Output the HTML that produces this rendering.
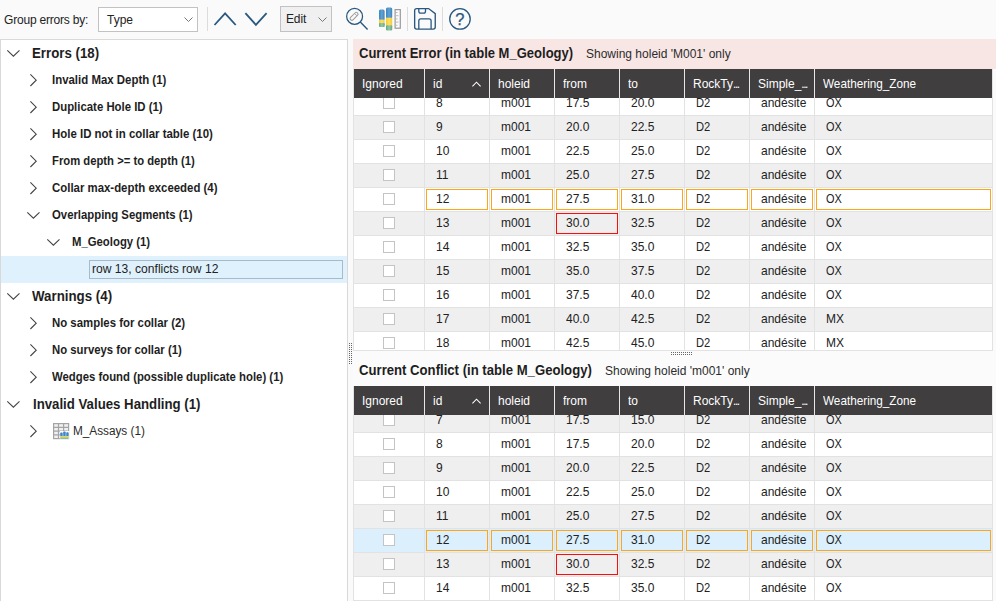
<!DOCTYPE html>
<html><head><meta charset="utf-8"><title>Errors</title>
<style>
*{box-sizing:border-box;margin:0;padding:0}
html,body{width:996px;height:601px;overflow:hidden}
body{position:relative;background:#fafafa;font-family:"Liberation Sans",sans-serif;font-size:12px;color:#222;}
.abs{position:absolute}
#toolbar{position:absolute;left:0;top:0;width:996px;height:39px;background:#fafafa}
#tree{position:absolute;left:0;top:39px;width:348px;height:562px;background:#fff;border:1px solid #d9d9d9;border-bottom:none}
.tl{position:absolute;white-space:nowrap;line-height:16px;height:16px;transform-origin:0 50%}
.b{font-weight:bold}
.h1{font-size:14px;font-weight:bold;color:#1e1e1e}
.h2{font-size:12.35px;font-weight:bold;color:#1e1e1e}
svg{position:absolute;overflow:visible}
.grid{position:absolute;left:354px;width:639px;overflow:hidden;background:#fff;border-right:1px solid #e2e2e2}
.row{position:absolute;left:0;width:639px;height:24px;border-bottom:1px solid #e2e2e2;background:#fff}
.row.alt{background:#efefef}
.row.sel{background:#dbf0fc}
.c{position:absolute;top:0;height:23px;line-height:23px;border-right:1px solid #e2e2e2;white-space:nowrap;overflow:hidden;color:#222}
.c span{position:absolute;left:11px;top:0;font-size:12.35px;transform:scaleX(.972);transform-origin:0 50%}
.cb{position:absolute;left:29px;top:5px;width:12px;height:12px;border:1px solid #c4c4c4;background:#fff}
.hd{position:absolute;left:0;top:0;width:639px;height:29px;background:#403e3f}
.hc{position:absolute;top:0;height:29px;line-height:29px;color:#fff;border-right:1px solid #e8e8e8;white-space:nowrap;overflow:hidden}
.hc i{font-style:normal;letter-spacing:-1.5px}
.hc span{position:absolute;left:8px;top:1px;font-size:12.35px;transform:scaleX(.972);transform-origin:0 50%}
.o{position:absolute;top:1px;height:21px;border:1px solid #ffa51a}
.r{position:absolute;top:1px;height:21px;border:1px solid #fb0d0d}
.title{position:absolute;left:353px;width:643px;height:30px}
.title .t1{position:absolute;left:6px;top:0;line-height:29px;font-size:14px;font-weight:bold;color:#1e1e1e;white-space:nowrap;transform:scaleX(.93);transform-origin:0 50%}
.title .t2{position:absolute;left:233px;top:0;line-height:31px;font-size:12px;color:#2c2c2c;white-space:nowrap}
</style></head>
<body>
<div id="toolbar">
<div class="tl" style="left:4px;top:12px;font-size:12px;letter-spacing:-0.2px">Group errors by:</div>
<div class="abs" style="left:98px;top:7px;width:100px;height:25px;border:1px solid #c2c2c2;background:#fff"></div>
<div class="tl" style="left:107px;top:12px">Type</div>
<svg style="left:184px;top:17px" width="9" height="6"><path d="M0.5 0.5 L4.5 4.5 L8.5 0.5" fill="none" stroke="#777" stroke-width="1"/></svg>
<div class="abs" style="left:207px;top:7px;width:1px;height:24px;background:#dcdcdc"></div>
<svg style="left:212px;top:11px" width="26" height="16"><path d="M2.5 14 L13.1 2.4 L23.7 14" fill="none" stroke="#2a587f" stroke-width="1.8"/></svg>
<svg style="left:243px;top:11px" width="26" height="16"><path d="M2.4 2.2 L12.9 13.8 L23.6 2.2" fill="none" stroke="#2a587f" stroke-width="1.8"/></svg>
<div class="abs" style="left:280px;top:6px;width:52px;height:26px;border:1px solid #c2c2c2;background:#f0f0f0"></div>
<div class="tl" style="left:286px;top:11px;letter-spacing:-0.15px">Edit</div>
<svg style="left:318px;top:17px" width="9" height="6"><path d="M0.5 0.5 L4.5 4.5 L8.5 0.5" fill="none" stroke="#777" stroke-width="1"/></svg>
<svg style="left:344px;top:6px" width="26" height="26"><circle cx="10.6" cy="10.4" r="7.95" fill="none" stroke="#2a587f" stroke-width="1.25"/><path d="M16.3 16.1 L23.6 23.4" stroke="#2a587f" stroke-width="1.4"/><g transform="translate(10.1,10.3) rotate(-45)"><rect x="-4.8" y="-1.7" width="9.6" height="3.4" rx="1.5" fill="none" stroke="#9a9a9a" stroke-width="1"/><path d="M2.4 -1.7 V1.7" stroke="#9a9a9a" stroke-width="0.9"/></g></svg>
<svg style="left:378px;top:6px" width="24" height="26"><defs><linearGradient id="gb" x1="0" x2="1" y1="0" y2="0"><stop offset="0" stop-color="#3c84be"/><stop offset="0.5" stop-color="#62a2d3"/><stop offset="1" stop-color="#3c84be"/></linearGradient><linearGradient id="gy" x1="0" x2="1" y1="0" y2="0"><stop offset="0" stop-color="#f3cc2e"/><stop offset="0.5" stop-color="#fde06a"/><stop offset="1" stop-color="#f3cc2e"/></linearGradient><linearGradient id="gg" x1="0" x2="1" y1="0" y2="0"><stop offset="0" stop-color="#66a981"/><stop offset="0.5" stop-color="#94c8a6"/><stop offset="1" stop-color="#66a981"/></linearGradient></defs><rect x="1" y="3.5" width="5.6" height="11" rx="1.6" fill="url(#gb)"/><rect x="1" y="13.6" width="5.6" height="3.8" fill="url(#gy)"/><rect x="1" y="17.2" width="5.6" height="3.9" rx="1.2" fill="url(#gg)"/><rect x="1" y="17.2" width="5.6" height="2" fill="url(#gg)"/><rect x="8" y="1.5" width="6.2" height="11" rx="1.6" fill="url(#gb)"/><rect x="8" y="11.7" width="6.2" height="8" fill="url(#gy)"/><rect x="8" y="19.5" width="6.2" height="4.9" rx="1.2" fill="url(#gg)"/><rect x="8" y="19.5" width="6.2" height="2" fill="url(#gg)"/><rect x="17.1" y="3.6" width="5.2" height="18.6" fill="#fbfbfb" stroke="#9a9a9a" stroke-width="1.2"/><path d="M17.5 6.5h2M17.5 9.7h3M17.5 12.9h2M17.5 16.1h3M17.5 19.3h2" stroke="#aaa" stroke-width="0.8"/></svg>
<div class="abs" style="left:407px;top:7px;width:1px;height:24px;background:#dcdcdc"></div>
<svg style="left:413px;top:7px" width="24" height="24"><path d="M3.6 1.55 H15.6 L22.25 6.6 V20 Q22.25 22.05 20.2 22.05 H3.7 Q1.65 22.05 1.65 20 V3.6 Q1.65 1.55 3.6 1.55 Z" fill="none" stroke="#2a587f" stroke-width="1.35"/><path d="M5.8 1.55 V4.3 Q5.8 6.2 7.7 6.2 H10.6 Q12.5 6.2 12.5 4.3 V1.55" fill="none" stroke="#2a587f" stroke-width="1.3"/><path d="M5.8 22.05 V13.9 Q5.8 11.85 7.8 11.85 H16.1 Q18.1 11.85 18.1 13.9 V22.05" fill="none" stroke="#2a587f" stroke-width="1.3"/></svg>
<div class="abs" style="left:442px;top:7px;width:1px;height:24px;background:#dcdcdc"></div>
<svg style="left:448px;top:7px" width="24" height="24"><circle cx="11.97" cy="11.95" r="10.25" fill="none" stroke="#2a587f" stroke-width="1.3"/><text x="11.9" y="18" text-anchor="middle" font-family="Liberation Sans" font-size="16.5" fill="#2a587f" stroke="#2a587f" stroke-width="0.25">?</text></svg>
</div>
<div id="tree">
<svg style="left:6px;top:9.700000000000003px" width="13" height="8"><path d="M0.3 0.4 L6.4 6.2 L12.5 0.4" fill="none" stroke="#444" stroke-width="1.1"/></svg>
<div class="tl h1" style="left:30.6px;top:5px;transform:scaleX(0.947)">Errors (18)</div>
<svg style="left:28.5px;top:33.599999999999994px" width="8" height="13"><path d="M0.4 0.4 L6.2 6.2 L0.4 12" fill="none" stroke="#444" stroke-width="1.1"/></svg>
<div class="tl h2" style="left:51.4px;top:32px;transform:scaleX(0.926)">Invalid Max Depth (1)</div>
<svg style="left:28.5px;top:60.599999999999994px" width="8" height="13"><path d="M0.4 0.4 L6.2 6.2 L0.4 12" fill="none" stroke="#444" stroke-width="1.1"/></svg>
<div class="tl h2" style="left:51.4px;top:59px;transform:scaleX(0.922)">Duplicate Hole ID (1)</div>
<svg style="left:28.5px;top:87.6px" width="8" height="13"><path d="M0.4 0.4 L6.2 6.2 L0.4 12" fill="none" stroke="#444" stroke-width="1.1"/></svg>
<div class="tl h2" style="left:51.4px;top:86px;transform:scaleX(0.9273)">Hole ID not in collar table (10)</div>
<svg style="left:28.5px;top:114.6px" width="8" height="13"><path d="M0.4 0.4 L6.2 6.2 L0.4 12" fill="none" stroke="#444" stroke-width="1.1"/></svg>
<div class="tl h2" style="left:51.4px;top:113px;transform:scaleX(0.9134)">From depth &gt;= to depth (1)</div>
<svg style="left:28.5px;top:141.6px" width="8" height="13"><path d="M0.4 0.4 L6.2 6.2 L0.4 12" fill="none" stroke="#444" stroke-width="1.1"/></svg>
<div class="tl h2" style="left:51.4px;top:140px;transform:scaleX(0.9245)">Collar max-depth exceeded (4)</div>
<svg style="left:25.5px;top:171.7px" width="13" height="8"><path d="M0.3 0.4 L6.4 6.2 L12.5 0.4" fill="none" stroke="#444" stroke-width="1.1"/></svg>
<div class="tl h2" style="left:51.4px;top:167px;transform:scaleX(0.9193)">Overlapping Segments (1)</div>
<svg style="left:46px;top:198.7px" width="13" height="8"><path d="M0.3 0.4 L6.4 6.2 L12.5 0.4" fill="none" stroke="#444" stroke-width="1.1"/></svg>
<div class="tl h2" style="left:70.7px;top:194px;transform:scaleX(0.9185)">M_Geology (1)</div>
<svg style="left:6px;top:252.7px" width="13" height="8"><path d="M0.3 0.4 L6.4 6.2 L12.5 0.4" fill="none" stroke="#444" stroke-width="1.1"/></svg>
<div class="tl h1" style="left:30.8px;top:248px;transform:scaleX(0.9505)">Warnings (4)</div>
<svg style="left:28.5px;top:276.6px" width="8" height="13"><path d="M0.4 0.4 L6.2 6.2 L0.4 12" fill="none" stroke="#444" stroke-width="1.1"/></svg>
<div class="tl h2" style="left:51.4px;top:275px;transform:scaleX(0.924)">No samples for collar (2)</div>
<svg style="left:28.5px;top:303.6px" width="8" height="13"><path d="M0.4 0.4 L6.2 6.2 L0.4 12" fill="none" stroke="#444" stroke-width="1.1"/></svg>
<div class="tl h2" style="left:51.4px;top:302px;transform:scaleX(0.918)">No surveys for collar (1)</div>
<svg style="left:28.5px;top:330.6px" width="8" height="13"><path d="M0.4 0.4 L6.2 6.2 L0.4 12" fill="none" stroke="#444" stroke-width="1.1"/></svg>
<div class="tl h2" style="left:51.4px;top:329px;transform:scaleX(0.9195)">Wedges found (possible duplicate hole) (1)</div>
<svg style="left:6px;top:360.7px" width="13" height="8"><path d="M0.3 0.4 L6.4 6.2 L12.5 0.4" fill="none" stroke="#444" stroke-width="1.1"/></svg>
<div class="tl h1" style="left:31.5px;top:356px;transform:scaleX(0.944)">Invalid Values Handling (1)</div>
<div class="abs" style="left:0px;top:216px;width:346px;height:27px;background:#dff1fd"></div>
<div class="abs" style="left:88px;top:220px;width:254px;height:19px;border:1px solid #a9bac6;background:#dff1fd"></div>
<div class="tl" style="left:91px;top:221px;font-size:12.1px">row 13, conflicts row 12</div>
<svg style="left:28.5px;top:384.6px" width="8" height="13"><path d="M0.4 0.4 L6.2 6.2 L0.4 12" fill="none" stroke="#444" stroke-width="1.1"/></svg>
<svg style="left:52px;top:383px" width="17" height="17"><rect x="0.6" y="0.6" width="15" height="15" fill="#f1f1f1" stroke="#a4a4a4" stroke-width="1.2"/><path d="M0.6 4.4h15M0.6 8.1h15M0.6 11.9h15M5.5 0.6v15M10.6 0.6v15" stroke="#a4a4a4" stroke-width="1.2"/><rect x="6.8" y="8" width="9.6" height="8.2" fill="#fff"/><rect x="7.2" y="9.6" width="2.5" height="4" rx="0.8" fill="#3f86c6"/><rect x="10.2" y="8.4" width="2.5" height="5" rx="0.8" fill="#3f86c6"/><rect x="13.2" y="9.2" width="2.5" height="4.4" rx="0.8" fill="#3f86c6"/><rect x="7.2" y="13" width="8.5" height="1.5" fill="#f4d548"/><rect x="7.2" y="14.4" width="8.5" height="1.5" fill="#7dba98"/></svg>
<div class="tl" style="left:72px;top:383px;transform:scaleX(.980);color:#2a2a2a">M_Assays (1)</div>
</div>
<div class="abs" style="left:349px;top:343px;width:1px;height:21px;background:repeating-linear-gradient(#666 0 1px,transparent 1px 2px)"></div>
<div class="abs" style="left:351px;top:343px;width:1px;height:21px;background:repeating-linear-gradient(#666 0 1px,transparent 1px 2px)"></div>
<div class="abs" style="left:353px;top:39px;width:643px;height:562px;background:#fbfbfb"></div>
<div class="title" style="top:39px;background:#f8e6e4"><div class="t1">Current Error (in table M_Geology)</div><div class="t2">Showing holeid 'M001' only</div></div>
<div class="abs" style="left:353px;top:69px;width:1px;height:282px;background:#e2e2e2"></div>
<div class="grid" style="top:69px;height:281px">
<div class="row" style="top:23px"><div class="c" style="left:0px;width:71px"><div class="cb"></div></div><div class="c" style="left:71px;width:65px"><span>8</span></div><div class="c" style="left:136px;width:65px"><span>m001</span></div><div class="c" style="left:201px;width:65px"><span>17.5</span></div><div class="c" style="left:266px;width:65px"><span>20.0</span></div><div class="c" style="left:331px;width:65px"><span style="transform:scaleX(.904)">D2</span></div><div class="c" style="left:396px;width:65px"><span>andésite</span></div><div class="c" style="left:461px;width:178px;border-right:none"><span style="transform:scaleX(.885)">OX</span></div></div>
<div class="row alt" style="top:47px"><div class="c" style="left:0px;width:71px"><div class="cb"></div></div><div class="c" style="left:71px;width:65px"><span>9</span></div><div class="c" style="left:136px;width:65px"><span>m001</span></div><div class="c" style="left:201px;width:65px"><span>20.0</span></div><div class="c" style="left:266px;width:65px"><span>22.5</span></div><div class="c" style="left:331px;width:65px"><span style="transform:scaleX(.904)">D2</span></div><div class="c" style="left:396px;width:65px"><span>andésite</span></div><div class="c" style="left:461px;width:178px;border-right:none"><span style="transform:scaleX(.885)">OX</span></div></div>
<div class="row" style="top:71px"><div class="c" style="left:0px;width:71px"><div class="cb"></div></div><div class="c" style="left:71px;width:65px"><span>10</span></div><div class="c" style="left:136px;width:65px"><span>m001</span></div><div class="c" style="left:201px;width:65px"><span>22.5</span></div><div class="c" style="left:266px;width:65px"><span>25.0</span></div><div class="c" style="left:331px;width:65px"><span style="transform:scaleX(.904)">D2</span></div><div class="c" style="left:396px;width:65px"><span>andésite</span></div><div class="c" style="left:461px;width:178px;border-right:none"><span style="transform:scaleX(.885)">OX</span></div></div>
<div class="row alt" style="top:95px"><div class="c" style="left:0px;width:71px"><div class="cb"></div></div><div class="c" style="left:71px;width:65px"><span>11</span></div><div class="c" style="left:136px;width:65px"><span>m001</span></div><div class="c" style="left:201px;width:65px"><span>25.0</span></div><div class="c" style="left:266px;width:65px"><span>27.5</span></div><div class="c" style="left:331px;width:65px"><span style="transform:scaleX(.904)">D2</span></div><div class="c" style="left:396px;width:65px"><span>andésite</span></div><div class="c" style="left:461px;width:178px;border-right:none"><span style="transform:scaleX(.885)">OX</span></div></div>
<div class="row" style="top:119px"><div class="c" style="left:0px;width:71px"><div class="cb"></div></div><div class="c" style="left:71px;width:65px"><span>12</span></div><div class="c" style="left:136px;width:65px"><span>m001</span></div><div class="c" style="left:201px;width:65px"><span>27.5</span></div><div class="c" style="left:266px;width:65px"><span>31.0</span></div><div class="c" style="left:331px;width:65px"><span style="transform:scaleX(.904)">D2</span></div><div class="c" style="left:396px;width:65px"><span>andésite</span></div><div class="c" style="left:461px;width:178px;border-right:none"><span style="transform:scaleX(.885)">OX</span></div><div class="o" style="left:72px;width:62px"></div><div class="o" style="left:137px;width:62px"></div><div class="o" style="left:202px;width:62px"></div><div class="o" style="left:267px;width:62px"></div><div class="o" style="left:332px;width:62px"></div><div class="o" style="left:397px;width:62px"></div><div class="o" style="left:462px;width:175px"></div></div>
<div class="row alt" style="top:143px"><div class="c" style="left:0px;width:71px"><div class="cb"></div></div><div class="c" style="left:71px;width:65px"><span>13</span></div><div class="c" style="left:136px;width:65px"><span>m001</span></div><div class="c" style="left:201px;width:65px"><span>30.0</span></div><div class="c" style="left:266px;width:65px"><span>32.5</span></div><div class="c" style="left:331px;width:65px"><span style="transform:scaleX(.904)">D2</span></div><div class="c" style="left:396px;width:65px"><span>andésite</span></div><div class="c" style="left:461px;width:178px;border-right:none"><span style="transform:scaleX(.885)">OX</span></div><div class="r" style="left:202px;width:62px"></div></div>
<div class="row" style="top:167px"><div class="c" style="left:0px;width:71px"><div class="cb"></div></div><div class="c" style="left:71px;width:65px"><span>14</span></div><div class="c" style="left:136px;width:65px"><span>m001</span></div><div class="c" style="left:201px;width:65px"><span>32.5</span></div><div class="c" style="left:266px;width:65px"><span>35.0</span></div><div class="c" style="left:331px;width:65px"><span style="transform:scaleX(.904)">D2</span></div><div class="c" style="left:396px;width:65px"><span>andésite</span></div><div class="c" style="left:461px;width:178px;border-right:none"><span style="transform:scaleX(.885)">OX</span></div></div>
<div class="row alt" style="top:191px"><div class="c" style="left:0px;width:71px"><div class="cb"></div></div><div class="c" style="left:71px;width:65px"><span>15</span></div><div class="c" style="left:136px;width:65px"><span>m001</span></div><div class="c" style="left:201px;width:65px"><span>35.0</span></div><div class="c" style="left:266px;width:65px"><span>37.5</span></div><div class="c" style="left:331px;width:65px"><span style="transform:scaleX(.904)">D2</span></div><div class="c" style="left:396px;width:65px"><span>andésite</span></div><div class="c" style="left:461px;width:178px;border-right:none"><span style="transform:scaleX(.885)">OX</span></div></div>
<div class="row" style="top:215px"><div class="c" style="left:0px;width:71px"><div class="cb"></div></div><div class="c" style="left:71px;width:65px"><span>16</span></div><div class="c" style="left:136px;width:65px"><span>m001</span></div><div class="c" style="left:201px;width:65px"><span>37.5</span></div><div class="c" style="left:266px;width:65px"><span>40.0</span></div><div class="c" style="left:331px;width:65px"><span style="transform:scaleX(.904)">D2</span></div><div class="c" style="left:396px;width:65px"><span>andésite</span></div><div class="c" style="left:461px;width:178px;border-right:none"><span style="transform:scaleX(.885)">OX</span></div></div>
<div class="row alt" style="top:239px"><div class="c" style="left:0px;width:71px"><div class="cb"></div></div><div class="c" style="left:71px;width:65px"><span>17</span></div><div class="c" style="left:136px;width:65px"><span>m001</span></div><div class="c" style="left:201px;width:65px"><span>40.0</span></div><div class="c" style="left:266px;width:65px"><span>42.5</span></div><div class="c" style="left:331px;width:65px"><span style="transform:scaleX(.904)">D2</span></div><div class="c" style="left:396px;width:65px"><span>andésite</span></div><div class="c" style="left:461px;width:178px;border-right:none"><span>MX</span></div></div>
<div class="row" style="top:263px"><div class="c" style="left:0px;width:71px"><div class="cb"></div></div><div class="c" style="left:71px;width:65px"><span>18</span></div><div class="c" style="left:136px;width:65px"><span>m001</span></div><div class="c" style="left:201px;width:65px"><span>42.5</span></div><div class="c" style="left:266px;width:65px"><span>45.0</span></div><div class="c" style="left:331px;width:65px"><span style="transform:scaleX(.904)">D2</span></div><div class="c" style="left:396px;width:65px"><span>andésite</span></div><div class="c" style="left:461px;width:178px;border-right:none"><span>MX</span></div></div>
<div class="hd"><div class="hc" style="left:0px;width:71px"><span>Ignored</span></div><div class="hc" style="left:71px;width:65px"><span>id</span></div><div class="hc" style="left:136px;width:65px"><span>holeid</span></div><div class="hc" style="left:201px;width:65px"><span>from</span></div><div class="hc" style="left:266px;width:65px"><span>to</span></div><div class="hc" style="left:331px;width:65px"><span>RockTy<i>...</i></span></div><div class="hc" style="left:396px;width:65px"><span>Simple_<i>...</i></span></div><div class="hc" style="left:461px;width:178px"><span style="transform:scaleX(.951)">Weathering_Zone</span></div><svg style="left:118px;top:11.5px" width="10" height="6"><path d="M0.4 5.3 L4.5 1.2 L8.6 5.3" fill="none" stroke="#fff" stroke-width="1.1"/></svg></div>
</div>
<div class="abs" style="left:671px;top:352px;width:21px;height:1px;background:repeating-linear-gradient(90deg,#666 0 1px,transparent 1px 2px)"></div>
<div class="abs" style="left:671px;top:354px;width:21px;height:1px;background:repeating-linear-gradient(90deg,#666 0 1px,transparent 1px 2px)"></div>
<div class="abs" style="left:354px;top:350px;width:639px;height:1px;background:#e2e2e2"></div>
<div class="title" style="top:356px;background:transparent"><div class="t1" style="transform:scaleX(.9385)">Current Conflict (in table M_Geology)</div><div class="t2" style="left:252px">Showing holeid 'm001' only</div></div>
<div class="abs" style="left:353px;top:386px;width:1px;height:215px;background:#e2e2e2"></div>
<div class="grid" style="top:386px;height:215px">
<div class="row alt" style="top:23px"><div class="c" style="left:0px;width:71px"><div class="cb"></div></div><div class="c" style="left:71px;width:65px"><span>7</span></div><div class="c" style="left:136px;width:65px"><span>m001</span></div><div class="c" style="left:201px;width:65px"><span>17.5</span></div><div class="c" style="left:266px;width:65px"><span>15.0</span></div><div class="c" style="left:331px;width:65px"><span style="transform:scaleX(.904)">D2</span></div><div class="c" style="left:396px;width:65px"><span>andésite</span></div><div class="c" style="left:461px;width:178px;border-right:none"><span style="transform:scaleX(.885)">OX</span></div></div>
<div class="row" style="top:47px"><div class="c" style="left:0px;width:71px"><div class="cb"></div></div><div class="c" style="left:71px;width:65px"><span>8</span></div><div class="c" style="left:136px;width:65px"><span>m001</span></div><div class="c" style="left:201px;width:65px"><span>17.5</span></div><div class="c" style="left:266px;width:65px"><span>20.0</span></div><div class="c" style="left:331px;width:65px"><span style="transform:scaleX(.904)">D2</span></div><div class="c" style="left:396px;width:65px"><span>andésite</span></div><div class="c" style="left:461px;width:178px;border-right:none"><span style="transform:scaleX(.885)">OX</span></div></div>
<div class="row alt" style="top:71px"><div class="c" style="left:0px;width:71px"><div class="cb"></div></div><div class="c" style="left:71px;width:65px"><span>9</span></div><div class="c" style="left:136px;width:65px"><span>m001</span></div><div class="c" style="left:201px;width:65px"><span>20.0</span></div><div class="c" style="left:266px;width:65px"><span>22.5</span></div><div class="c" style="left:331px;width:65px"><span style="transform:scaleX(.904)">D2</span></div><div class="c" style="left:396px;width:65px"><span>andésite</span></div><div class="c" style="left:461px;width:178px;border-right:none"><span style="transform:scaleX(.885)">OX</span></div></div>
<div class="row" style="top:95px"><div class="c" style="left:0px;width:71px"><div class="cb"></div></div><div class="c" style="left:71px;width:65px"><span>10</span></div><div class="c" style="left:136px;width:65px"><span>m001</span></div><div class="c" style="left:201px;width:65px"><span>22.5</span></div><div class="c" style="left:266px;width:65px"><span>25.0</span></div><div class="c" style="left:331px;width:65px"><span style="transform:scaleX(.904)">D2</span></div><div class="c" style="left:396px;width:65px"><span>andésite</span></div><div class="c" style="left:461px;width:178px;border-right:none"><span style="transform:scaleX(.885)">OX</span></div></div>
<div class="row alt" style="top:119px"><div class="c" style="left:0px;width:71px"><div class="cb"></div></div><div class="c" style="left:71px;width:65px"><span>11</span></div><div class="c" style="left:136px;width:65px"><span>m001</span></div><div class="c" style="left:201px;width:65px"><span>25.0</span></div><div class="c" style="left:266px;width:65px"><span>27.5</span></div><div class="c" style="left:331px;width:65px"><span style="transform:scaleX(.904)">D2</span></div><div class="c" style="left:396px;width:65px"><span>andésite</span></div><div class="c" style="left:461px;width:178px;border-right:none"><span style="transform:scaleX(.885)">OX</span></div></div>
<div class="row sel" style="top:143px"><div class="c" style="left:0px;width:71px"><div class="cb"></div></div><div class="c" style="left:71px;width:65px"><span>12</span></div><div class="c" style="left:136px;width:65px"><span>m001</span></div><div class="c" style="left:201px;width:65px"><span>27.5</span></div><div class="c" style="left:266px;width:65px"><span>31.0</span></div><div class="c" style="left:331px;width:65px"><span style="transform:scaleX(.904)">D2</span></div><div class="c" style="left:396px;width:65px"><span>andésite</span></div><div class="c" style="left:461px;width:178px;border-right:none"><span style="transform:scaleX(.885)">OX</span></div><div class="o" style="left:72px;width:62px"></div><div class="o" style="left:137px;width:62px"></div><div class="o" style="left:202px;width:62px"></div><div class="o" style="left:267px;width:62px"></div><div class="o" style="left:332px;width:62px"></div><div class="o" style="left:397px;width:62px"></div><div class="o" style="left:462px;width:175px"></div></div>
<div class="row alt" style="top:167px"><div class="c" style="left:0px;width:71px"><div class="cb"></div></div><div class="c" style="left:71px;width:65px"><span>13</span></div><div class="c" style="left:136px;width:65px"><span>m001</span></div><div class="c" style="left:201px;width:65px"><span>30.0</span></div><div class="c" style="left:266px;width:65px"><span>32.5</span></div><div class="c" style="left:331px;width:65px"><span style="transform:scaleX(.904)">D2</span></div><div class="c" style="left:396px;width:65px"><span>andésite</span></div><div class="c" style="left:461px;width:178px;border-right:none"><span style="transform:scaleX(.885)">OX</span></div><div class="r" style="left:202px;width:62px"></div></div>
<div class="row" style="top:191px"><div class="c" style="left:0px;width:71px"><div class="cb"></div></div><div class="c" style="left:71px;width:65px"><span>14</span></div><div class="c" style="left:136px;width:65px"><span>m001</span></div><div class="c" style="left:201px;width:65px"><span>32.5</span></div><div class="c" style="left:266px;width:65px"><span>35.0</span></div><div class="c" style="left:331px;width:65px"><span style="transform:scaleX(.904)">D2</span></div><div class="c" style="left:396px;width:65px"><span>andésite</span></div><div class="c" style="left:461px;width:178px;border-right:none"><span style="transform:scaleX(.885)">OX</span></div></div>
<div class="hd"><div class="hc" style="left:0px;width:71px"><span>Ignored</span></div><div class="hc" style="left:71px;width:65px"><span>id</span></div><div class="hc" style="left:136px;width:65px"><span>holeid</span></div><div class="hc" style="left:201px;width:65px"><span>from</span></div><div class="hc" style="left:266px;width:65px"><span>to</span></div><div class="hc" style="left:331px;width:65px"><span>RockTy<i>...</i></span></div><div class="hc" style="left:396px;width:65px"><span>Simple_<i>...</i></span></div><div class="hc" style="left:461px;width:178px"><span style="transform:scaleX(.951)">Weathering_Zone</span></div><svg style="left:118px;top:11.5px" width="10" height="6"><path d="M0.4 5.3 L4.5 1.2 L8.6 5.3" fill="none" stroke="#fff" stroke-width="1.1"/></svg></div>
</div>
</body></html>
